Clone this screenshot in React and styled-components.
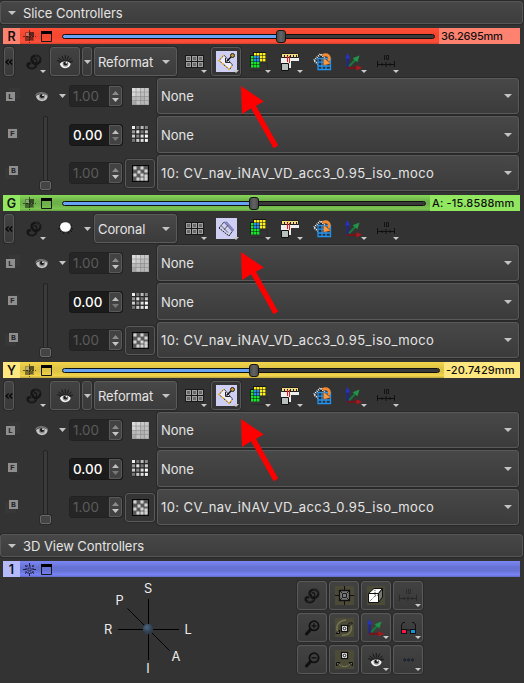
import React from "react";
import styled, { createGlobalStyle } from "styled-components";

const Global = createGlobalStyle`
  * { box-sizing: border-box; }
  html, body { margin: 0; background: #333; }
  body { font-family: Inter, "Liberation Sans", sans-serif; font-size: 14px; color: #e4e4e4; overflow: hidden; }
  svg { display: block; flex: none; }
`;

const Page = styled.main`
  width: 524px;
  height: 683px;
  padding-top: 1px;
  background: #333;
`;

const Header = styled.header`
  display: flex;
  align-items: center;
  gap: 7px;
  width: 523px;
  height: 23px;
  padding-left: 7px;
  border: 1px solid #565656;
  border-radius: 3px;
  background: linear-gradient(#474747, #3d3d3d);
  box-shadow: 0 0 0 1px #292929;
  font-size: 13px;
  letter-spacing: -0.06px;
  white-space: nowrap;
`;

const Panel = styled.section`
  position: relative;
  width: 517px;
  height: ${(p) => p.$h || 167}px;
  margin-left: 3px;
`;

const Bar = styled.div`
  display: flex;
  align-items: stretch;
  height: 16px;
  background: linear-gradient(${(p) => p.$c.top}, ${(p) => p.$c.mid} 38%, ${(p) => p.$c.mid} 60%, ${(p) => p.$c.end} 86%, ${(p) => p.$c.edge});
  color: #111;
`;

const BarLetter = styled.div`
  width: 17px;
  background: ${(p) => p.$bg};
  font-size: 12.5px;
  font-weight: 600;
  line-height: 17px;
  text-align: center;
`;

const BarIcons = styled.div`
  display: flex;
  align-items: center;
  gap: 5px;
  padding-left: 3px;
  width: 42px;
`;

const SliderTrack = styled.div`
  position: relative;
  align-self: center;
  flex: 1;
  height: 5px;
  margin-right: 4px;
  border: 1px solid #111;
  border-radius: 3px;
  background: linear-gradient(90deg, #66a3f5 ${(p) => p.$at}px, #393939 ${(p) => p.$at}px);
`;

const SliderKnob = styled.span`
  position: absolute;
  top: -5px;
  left: ${(p) => p.$at}px;
  width: 10px;
  height: 13px;
  border: 1px solid #151515;
  border-radius: 3px;
  background: linear-gradient(90deg, #4b4b4b, #646464, #4b4b4b);
`;

const BarValue = styled.div`
  width: ${(p) => p.$w}px;
  padding-left: 2px;
  background: ${(p) => p.$bg};
  font-size: 11px;
  font-weight: 500;
  letter-spacing: ${(p) => p.$ls}px;
  line-height: 16.5px;
  white-space: nowrap;
`;

const Toolbar = styled.div`
  display: flex;
  height: 30px;
  margin: 3px 0 1px;
  padding-left: 1px;
`;

const Tool = styled.button`
  position: relative;
  display: flex;
  align-items: center;
  justify-content: center;
  width: ${(p) => p.$w || 30}px;
  height: 29px;
  margin: 0 ${(p) => p.$gap ?? 2}px 0 0;
  padding: 0;
  border: 1px solid ${(p) => (p.$raised ? "#595959" : "transparent")};
  border-radius: 3px;
  background: ${(p) => (p.$raised ? (p.$dark ? "#343434" : "linear-gradient(#424242, #393939)") : "none")};
  box-shadow: ${(p) => (p.$raised ? "0 0 0 1px #2a2a2a" : "none")};
  color: #101010;
`;

const Corner = styled.span`
  position: absolute;
  right: 1px;
  bottom: 2px;
`;

const Highlight = styled.span`
  display: block;
  width: 21px;
  height: 21px;
  background: #cfcff4;
`;

const OrientationBox = styled.div`
  display: flex;
  align-items: center;
  justify-content: space-between;
  width: 83px;
  height: 29px;
  margin-right: 2px;
  padding: 0 6px 0 3px;
  border: 1px solid #5b5b5b;
  border-radius: 3px;
  background: linear-gradient(#484848, #3b3b3b);
  box-shadow: 0 0 0 1px #292929;
  font-size: 13px;
  letter-spacing: -0.1px;
`;

const Layers = styled.div`
  display: grid;
  grid-template-columns: 24px 28px 14px 54px 32px 364px;
  grid-template-rows: 36px 37px 36px;
  row-gap: 2px;
  align-items: center;
`;

const BadgeCell = styled.div`
  grid-column: 1;
  grid-row: ${(p) => p.$row};
  padding-left: ${(p) => p.$x}px;
  padding-bottom: ${(p) => p.$up}px;
`;

const EyeCell = styled.div`
  display: flex;
  justify-content: center;
`;

const FadeCell = styled.div`
  grid-column: 2;
  grid-row: 2 / 4;
  align-self: stretch;
  display: flex;
  flex-direction: column;
  align-items: center;
  padding-left: 9px;
`;

const FadeTrack = styled.div`
  width: 5px;
  height: 65px;
  border: 1px solid #232323;
  border-radius: 2px 2px 0 0;
  background: #3a3a3a;
`;

const FadeKnob = styled.div`
  width: 11px;
  height: 9px;
  border: 1px solid #686868;
  border-radius: 2px;
  background: #444;
  box-shadow: 0 0 0 1px #292929;
`;

const ArrowCell = styled.div`
  display: flex;
  justify-content: center;
  padding-bottom: 1px;
`;

const Spin = styled.div`
  grid-column: 4;
  grid-row: ${(p) => p.$row};
  display: flex;
  width: 54px;
  height: 22px;
  border: 1px solid ${(p) => (p.$on ? "#171717" : "#222")};
  border-radius: 3px;
  background: ${(p) => (p.$on ? "#1b1b1b" : "#262626")};
  color: ${(p) => (p.$on ? "#fff" : "#5c5c5c")};
  font-weight: ${(p) => (p.$on ? 500 : 400)};
`;

const SpinText = styled.span`
  flex: 1;
  padding-left: 3px;
  font-size: 13.4px;
  line-height: 21px;
`;

const SpinButtons = styled.span`
  display: flex;
  flex-direction: column;
  align-items: center;
  justify-content: space-between;
  width: 13px;
  padding: 4px 0 3px;
  border: 1px solid #5a5a5a;
  border-radius: 0 3px 3px 0;
  background: #424242;
`;

const InterpCell = styled.div`
  grid-column: 5;
  grid-row: ${(p) => p.$row};
  display: flex;
  justify-content: center;
  padding-left: ${(p) => p.$pad}px;
`;

const VolumeBox = styled.div`
  grid-column: 6;
  grid-row: ${(p) => p.$row};
  align-self: stretch;
  display: flex;
  align-items: center;
  justify-content: space-between;
  margin-left: 2px;
  width: 362px;
  padding: 0 6px 0 3px;
  border: 1px solid #595959;
  border-radius: 3px;
  background: linear-gradient(#484848, #3b3b3b);
  box-shadow: 0 0 0 1px #292929;
  font-size: 13px;
  white-space: nowrap;
`;

const VolumeName = styled.span`
  letter-spacing: ${(p) => p.$ls || 0}px;
`;

const Callout = styled.svg`
  position: absolute;
  left: 237px;
  top: ${(p) => p.$top}px;
  pointer-events: none;
`;

const ViewBody = styled.div`
  display: flex;
  height: 102px;
  padding: 4px 0 0 94px;
`;

const ViewTools = styled.div`
  display: grid;
  grid-template-columns: repeat(4, 30px);
  grid-auto-rows: 29px;
  column-gap: 2px;
  row-gap: 3px;
  margin-left: 97px;
`;

const Space = styled.div`
  height: ${(p) => p.$h}px;
`;

const Triangle = ({ up, c = "#c4c4c4", w = 8, h = 4 }) => (
  <svg width={w} height={h} viewBox="0 0 8 4" preserveAspectRatio="none">
    <path d={up ? "M0 4L4 0L8 4Z" : "M0 0H8L4 4Z"} fill={c} />
  </svg>
);

const CornerMark = () => (
  <Corner><Triangle w={6} h={3} c="#c9c9c9" /></Corner>
);

const SliceIcon = ({ c = "#111" }) => (
  <svg width="13" height="13" viewBox="0 0 13 13">
    <path d="M6.5 0V13M0 6.5H13" stroke="#111" strokeDasharray="2 1" opacity=".6" />
    <path d="M2 2H11V11H2Z" fill={c} opacity=".3" />
    <path d="M2 6H6V11H2Z" fill="#111" opacity=".25" />
    <path d="M6 2H11V6H6Z" fill="#111" opacity=".5" />
    <path d="M6 7H10V10H6Z" fill="#111" opacity=".4" />
    <path d="M3 3H6V6H3Z" fill="#fff" opacity=".3" />
  </svg>
);

const CenterIcon = () => (
  <svg width="13" height="13" viewBox="0 0 13 13" fill="none" stroke="#202040">
    <path d="M6.5 0V3M6.5 10V13M0 6.5H3M10 6.5H13" />
    <path d="M3 3H10V10H3Z" strokeWidth="1.1" strokeDasharray="2 1" />
    <path d="M5 5H8V8H5Z" strokeWidth=".8" />
    <path d="M2 2L4 4M9 9L11 11M2 11L4 9M9 4L11 2" strokeWidth=".7" />
  </svg>
);

const WindowIcon = () => (
  <svg width="11" height="11" viewBox="0 0 11 11">
    <path d="M.5 .5H10.5V10.5H.5Z" fill="none" stroke="#171717" />
    <path d="M0 0H11V3H0Z" fill="#000" />
  </svg>
);

const LinkIcon = ({ size = 16 }) => (
  <svg width={size} height={size} viewBox="0 0 16 16" fill="none" strokeLinecap="round">
    <g stroke="#151515" strokeWidth="2.4">
      <path d="M5.6 6.8C4.6 3.8 7 1.8 10 1.8C13 1.8 14.6 4 14.2 6.4C13.8 9 11.2 10.4 8.6 9.8C7 9.4 6.4 8.2 7 7.2" />
      <path d="M10.2 8.8C11 11.6 9 13.8 6.2 14.2C3.4 14.4 1.4 12.8 1.6 10.8C1.8 9.4 3.2 8.8 4.2 9.6" />
    </g>
    <path d="M8.2 4.8C9.6 4.4 11 5.4 10.6 7" stroke="#151515" strokeWidth="1.4" />
    <path d="M9.4 1.8C12.4 1.4 14 3.6 13.9 5.6M3.4 13C5.4 14.6 8.4 13.6 9.4 11.8" stroke="#363636" strokeWidth=".7" />
  </svg>
);

const EyeIcon = ({ lashes = true, w = 16, h = 14, dim }) => (
  <svg width={w} height={h} viewBox={lashes ? "0 0 17 15" : "2 3 13 12"}>
    {lashes && <path d="M0 6L4 7M1.5 3L5.5 6M5 .8L7 5M8.8 0V4.6M12.5 .8L10.5 5M15.5 3.2L12 6M17 6.5L13 7.2" stroke="#131313" strokeWidth="1" />}
    <path d="M3 9.6C4 6.4 13 6 14.6 9.2C14 15.4 4.6 16 3 9.6Z" fill={dim ? "#c6c6c6" : "#f4f4f4"} />
    <path d="M2.6 8.6C4.8 4.8 12.2 4.4 15 8.8" fill="none" stroke={dim ? "#777" : "#232323"} strokeWidth="1.2" />
    <circle cx="9" cy="9.4" r="3.1" fill="#8a8a8a" />
    <circle cx="9" cy="9" r="2.1" fill="#1a1a1a" />
    <circle cx="10" cy="8.2" r=".9" fill="#eee" />
  </svg>
);

const SunEye = () => (
  <svg width="17" height="15" viewBox="0 0 17 15">
    <path d="M1 8L4 7M3 11L5 9M6 13L7 11M11 11L12 13M13 9L15 11M14 7L16 8M2 4L4 5M15 4L13 5" stroke="#111" />
    <ellipse cx="8.4" cy="6" rx="5.4" ry="4.8" fill="#fff" />
  </svg>
);

const LayoutIcon = () => (
  <svg width="19" height="13" viewBox="0 0 19 13">
    <path d="M0 0H19V13H0Z" fill="#191919" />
    {[0, 1].flatMap((r) => [0, 1, 2].map((c) => (
      <rect key={`${r}${c}`} x={1.5 + 6 * c} y={1.5 + 6 * r} width="4" height="4" fill="#696969" stroke="#a0a0a0" />
    )))}
  </svg>
);

const SliceInSpace = ({ widget }) => (
  <Highlight>
    <svg width="21" height="21" viewBox="0 0 21 21">
      {widget ? (
        <>
          <path d="M3 9.5L8 4L16.5 14L13.5 18.5Z" fill="#ececff" stroke="#151515" strokeDasharray="2 .6" />
          <path d="M3 9.5L8 4" stroke="#f5b91e" strokeWidth="1.4" strokeDasharray="1.5 1.5" />
          <path d="M3 9.5L13.5 18.5L16.5 14" fill="none" stroke="#f5b91e" strokeWidth="1.4" strokeDasharray="2 2" />
          <path d="M10.5 10.5L15 6" stroke="#111" strokeWidth="1.5" />
          <path d="M9.5 7V11.5H14" fill="none" stroke="#222" />
          <circle cx="16.5" cy="4.5" r="2" fill="#c89a2a" stroke="#222" />
        </>
      ) : (
        <>
          <path d="M3 10L8 4L16.5 13L13 18Z" fill="#d0d0f2" stroke="#222" strokeDasharray="2 .7" />
          <path d="M8 4L11 4L18 12L16.5 13Z" fill="#8c8cc8" stroke="#6f6fa6" strokeWidth=".6" />
          <path d="M5.5 8L12 14.5M8 12L12 7" stroke="#444" strokeWidth=".8" />
        </>
      )}
    </svg>
  </Highlight>
);

const VoxelIcon = () => (
  <svg width="19" height="19" viewBox="0 0 19 19">
    <path d="M8 11H18.5V18.5H2" fill="none" stroke="#2a2a2a" />
    <path d="M1 3H4V0H17V10H11V15H1Z" fill="#151515" />
    {[0, 1, 2].flatMap((r) => [0, 1, 2, 3].map((c) => (
      <rect key={`y${r}${c}`} x={5 + 3 * c} y={1 + 3 * r} width="2.5" height="2.5" fill={r > 0 && c < 2 ? "#268ee9" : "#fff01b"} />
    )))}
    {[0, 1, 2, 3].flatMap((r) => [0, 1, 2].map((c) => (
      (c === 0 || r > 1) && <rect key={`g${r}${c}`} x={2 + 3 * c} y={4 + 3 * r} width="2.5" height="2.5" fill="#13e72b" />
    )))}
  </svg>
);

const LightboxRuler = () => (
  <svg width="19" height="18" viewBox="0 0 19 18">
    <path d="M0 5H18V8H10V15H7V10H0Z" fill="#eee" />
    <path d="M.5 .5H17.5V4.5H.5Z" fill="#f2d982" stroke="#222" />
    <path d="M3.5 2V4M6.5 2V4M9.5 2V4M12.5 2V4M15.5 2V4" stroke="#222" />
    <path d="M6.5 3V9M8.5 3V10" stroke="#e81919" strokeWidth="1" />
    <path d="M.5 10.5H7.5V17.5H.5Z" fill="#b8c0be" stroke="#111" />
  </svg>
);

const RotateGrid = () => (
  <svg width="19" height="18" viewBox="0 0 19 18">
    <path d="M1 7.5L7.5 1L12 5L5 11Z" fill="#222" stroke="#f2f2f2" strokeDasharray="1 1" strokeWidth="2" />
    <path d="M5 5.5H17.5V16.5H5ZM5 9.2H17.5M5 13H17.5M9 5.5V16.5M13 5.5V16.5" fill="#26303a" stroke="#2394ef" strokeWidth="1.3" />
    <path d="M9.5 2.6C14 .4 18 3 15.4 8" fill="none" stroke="#f38b32" strokeWidth="2.8" />
    <path d="M10.5 5L10.5 12.2L17.6 10.6Z" fill="#f79a42" stroke="#c85e16" strokeWidth=".5" />
  </svg>
);

const AxesIcon = () => (
  <svg width="18" height="18" viewBox="0 0 18 18">
    <path d="M3.5 14L10.5 6.5" stroke="#16793a" strokeWidth="2" />
    <path d="M7.6 5.2L14.5 2.5L12.4 9.2Z" fill="#219447" />
    <path d="M2.6 15V4" stroke="#1e2890" strokeWidth="2.2" />
    <path d="M0 5.5L2.6 0L5.2 5.5Z" fill="#2733bd" />
    <path d="M2 14.8H12" stroke="#7c1118" strokeWidth="2" />
    <path d="M11.3 12.2L17.5 14.8L11.3 17.4Z" fill="#a01a20" />
  </svg>
);

const RulerIcon = ({ c = "#101010" }) => (
  <svg width="18" height="13" viewBox="0 0 18 13" fill="none" stroke={c}>
    <path d="M7.5 0V5M9.5 .5H11.5V4.5H9.5Z" strokeWidth=".9" />
    <path d="M.5 6V12M17.5 6V12M0 9.5H18M5 8V11M9 7V12M13 8V11" />
  </svg>
);

const BadgeArt = styled.span`
  display: block;
  width: 9px;
  height: 9px;
  background: #8f8f8f;
  box-shadow: ${(p) => p.$x}px ${(p) => p.$y}px 0 1px #373737;
  color: #252525;
  font-family: "Liberation Mono", monospace;
  font-size: 8px;
  font-weight: 700;
  line-height: 9px;
  text-align: center;
`;

const shades = [
  ["#dcdcdc", "#d8d8d8", "#c8c8c8", "#c6c6c6"],
  ["#d6d6d6", "#cccccc", "#bcbcbc", "#c2c2c2"],
  ["#b8b8b8", "#bcbcbc", "#b0b0b0", "#bababa"],
  ["#a8a8a8", "#c2c2c2", "#b4b4b4", "#bababa"],
];
const mixed = [
  ["#eee", "#777", "#bbb", "#888"],
  ["#999", "#e4e4e4", "#777", "#ccc"],
  ["#ccc", "#888", "#ddd", "#fff"],
  ["#777", "#ccc", "#ddd", "#f3f3f3"],
];

const GridIcon = ({ soft }) => (
  <svg width="17" height="17" viewBox="0 0 17 17">
    <rect width="17" height="17" fill={soft ? "#8d8d8d" : "#292929"} />
    {(soft ? shades : mixed).flatMap((row, y) => row.map((c, x) => (
      <rect key={`${x}${y}`} x={x * 4.3} y={y * 4.3} width={soft ? 3.7 : 3} height={soft ? 3.7 : 3} fill={c} />
    )))}
  </svg>
);

const BlurGrid = () => (
  <svg width="17" height="17" viewBox="0 0 17 17">
    <defs>
      <radialGradient id="glow"><stop stopColor="#fff" /><stop offset="1" stopColor="#fff" stopOpacity="0" /></radialGradient>
    </defs>
    <rect x=".5" y=".5" width="16" height="16" fill="#555" stroke="#090404" />
    {[[3, 3], [10, 3], [7, 7], [14, 6], [3, 10], [10, 10], [14, 11], [14, 14], [6, 14], [10, 14]].map(([x, y]) => (
      <circle key={`${x}-${y}`} cx={x} cy={y} r="2.7" fill="url(#glow)" />
    ))}
  </svg>
);

const Magnifier = ({ plus }) => (
  <svg width="15" height="16" viewBox="0 0 15 16" fill="none" stroke="#101010">
    <circle cx="9" cy="5.8" r="4.6" strokeWidth="1.8" />
    <path d="M5.5 9.5L1.5 14" strokeWidth="3" strokeLinecap="round" />
    <path d={plus ? "M6.5 5.8H11.5M9 3.3V8.3" : "M6.5 5.8H11.5"} strokeWidth="1.3" />
  </svg>
);

const CenterView = () => (
  <svg width="19" height="19" viewBox="0 0 19 19" fill="none" stroke="#111">
    <rect width="19" height="19" fill="#4c4b38" stroke="none" />
    <path d="M9.5 0V5M9.5 14V19M0 9.5H5M14 9.5H19" />
    <path d="M4.5 4.5H14.5V14.5H4.5Z" fill="#777" strokeWidth="1.3" />
    <path d="M7.5 7.5H11.5V11.5H7.5ZM4.5 4.5L7 7M14.5 4.5L12 7M4.5 14.5L7 12M14.5 14.5L12 12" strokeWidth=".9" />
  </svg>
);

const CubeIcon = () => (
  <svg width="18" height="19" viewBox="0 0 18 19" stroke="#111">
    <rect width="18" height="19" fill="#4c4b38" stroke="none" />
    <path d="M1.5 7.5L7 2.5H15.5L11.5 7.5Z" fill="#fff" />
    <path d="M11.5 7.5L15.5 2.5V11L11.5 16.5Z" fill="#777" />
    <path d="M1.5 7.5H11.5V16.5H1.5Z" fill="#fff" />
    <path d="M1.5 16.5L8 10V3M8 10L11 9" fill="none" strokeWidth=".8" strokeDasharray="1 1" />
  </svg>
);

const SpinView = ({ rock }) => (
  <svg width="19" height="19" viewBox="0 0 19 19" fill="none" stroke="#111">
    <rect width="19" height="19" fill="#4c4b38" stroke="none" />
    {rock ? (
      <>
        <path d="M4 14C7 17.5 12 17.5 15 14" stroke="#7c7b58" />
        <path d="M1.5 12.5H5L1.5 16ZM17.5 12.5H14L17.5 16Z" fill="#77765a" />
      </>
    ) : (
      <>
        <path d="M3 14C0 8 3 3 11 2M15 6C19 12 14 18 7 17" stroke="#777653" strokeWidth="1.5" />
        <path d="M14 8.5V5H17.5ZM1 15.5H4.5V12Z" fill="#77765a" />
      </>
    )}
    <rect x="6.5" y={rock ? 2.5 : 7.5} width="6" height="6" fill="#fff" strokeWidth="1.3" />
    <circle cx="9.5" cy={rock ? 5.5 : 10.5} r="1.3" />
  </svg>
);

const GlassesIcon = () => (
  <svg width="15" height="12" viewBox="0 0 15 12">
    <path d="M.5 7V3L2 .5H4M14.5 7V3L13 .5H11" fill="none" stroke="#111" />
    <path d="M5 8H10" stroke="#111" />
    <rect x="0" y="7" width="6" height="5" fill="#111" />
    <rect x="9" y="7" width="6" height="5" fill="#111" />
    <rect x="1" y="8" width="4" height="3" fill="#fa174e" />
    <rect x="10" y="8" width="4" height="3" fill="#1494dd" />
  </svg>
);

const DotsIcon = () => (
  <svg width="11" height="4" viewBox="0 0 11 4" fill="#263746" stroke="#111827" strokeWidth=".8">
    <circle cx="1.7" cy="2" r="1.1" /><circle cx="5.6" cy="2" r="1.1" /><circle cx="9.5" cy="2" r="1.1" />
  </svg>
);

const Chevrons = () => (
  <svg width="8" height="6" viewBox="0 0 8 6" fill="none" stroke="#050505" strokeWidth="1.3">
    <path d="M3.7 .5L1 3L3.7 5.5M7.3 .5L4.6 3L7.3 5.5" />
  </svg>
);

const Compass = () => (
  <svg width="103" height="98" viewBox="97 581 103 98">
    <defs>
      <radialGradient id="ball" cx=".4" cy=".35"><stop stopColor="#476782" /><stop offset="1" stopColor="#303c4b" /></radialGradient>
    </defs>
    <path d="M148.5 599V660M118 629.5H179M127.5 608.5L169.5 650.5" stroke="#000" fill="none" />
    <circle cx="148" cy="629" r="5.2" fill="url(#ball)" />
    <g fill="#ececec" fontFamily="Inter, sans-serif" fontSize="12.8" textAnchor="middle">
      <text x="148" y="593">S</text><text x="119.5" y="605">P</text><text x="108" y="633.5">R</text>
      <text x="188" y="633.5">L</text><text x="176" y="661">A</text><text x="148" y="673">I</text>
    </g>
  </svg>
);

const RedArrow = ({ top }) => (
  <Callout $top={top} width="44" height="68" viewBox="0 0 44 68">
    <path d="M1 1L23.8 16.5L16 20.8L38.2 60.5L33.6 63.3L11 23.3L2 29Z" fill="#fe0000" />
  </Callout>
);

const SpinBox = ({ row, value, on, down }) => (
  <Spin $row={row} $on={on}>
    <SpinText>{value}</SpinText>
    <SpinButtons>
      <Triangle up w={7} h={4} c={down ? "#8b8b8b" : "#bdbdbd"} />
      <Triangle w={7} h={4} c={down ? "#c5c5c5" : "#777"} />
    </SpinButtons>
  </Spin>
);

function SlicePanel({ letter, colors, at, value, valueWidth, valueSpacing, orientation, widget, arrowTop }) {
  return (
    <Panel>
      <Bar $c={colors}>
        <BarLetter $bg={colors.light}>{letter}</BarLetter>
        <BarIcons><SliceIcon /><WindowIcon /></BarIcons>
        <SliderTrack $at={at}><SliderKnob $at={at} /></SliderTrack>
        <BarValue $bg={colors.light} $w={valueWidth} $ls={valueSpacing}>{value}</BarValue>
      </Bar>
      <Toolbar>
        <Tool $w={10} $raised $gap={6}><Chevrons /></Tool>
        <Tool $w={28} $gap={2}><LinkIcon /><CornerMark /></Tool>
        <Tool $raised={widget} $gap={2}>{widget ? <EyeIcon /> : <SunEye />}</Tool>
        <Tool $w={10} $raised={widget} $gap={2}><Triangle w={7} /></Tool>
        <OrientationBox>{orientation}<Triangle /></OrientationBox>
        <Tool><LayoutIcon /><CornerMark /></Tool>
        <Tool $raised={widget} $dark><SliceInSpace widget={widget} /><CornerMark /></Tool>
        <Tool><VoxelIcon /><CornerMark /></Tool>
        <Tool><LightboxRuler /><CornerMark /></Tool>
        <Tool><RotateGrid /></Tool>
        <Tool><AxesIcon /><CornerMark /></Tool>
        <Tool><RulerIcon /><CornerMark /></Tool>
      </Toolbar>
      <Layers>
        <BadgeCell $row={1} $x={3} $up={0}><BadgeArt $x={4} $y={-3}>L</BadgeArt></BadgeCell>
        <BadgeCell $row={2} $x={5} $up={3}><BadgeArt $x={1} $y={0}>F</BadgeArt></BadgeCell>
        <BadgeCell $row={3} $x={6} $up={6}><BadgeArt $x={-3} $y={3}>B</BadgeArt></BadgeCell>
        <EyeCell><EyeIcon w={13} h={12} lashes={false} dim /></EyeCell>
        <ArrowCell><Triangle w={7} /></ArrowCell>
        <FadeCell><FadeTrack /><FadeKnob /></FadeCell>
        <SpinBox row={1} value="1.00" down />
        <SpinBox row={2} value="0.00" on />
        <SpinBox row={3} value="1.00" down />
        <InterpCell $row={1} $pad={3}><GridIcon soft /></InterpCell>
        <InterpCell $row={2} $pad={3}><GridIcon /></InterpCell>
        <InterpCell $row={3} $pad={2}><Tool $raised $dark $gap={0}><BlurGrid /></Tool></InterpCell>
        <VolumeBox $row={1}><VolumeName>None</VolumeName><Triangle /></VolumeBox>
        <VolumeBox $row={2}><VolumeName>None</VolumeName><Triangle /></VolumeBox>
        <VolumeBox $row={3}><VolumeName $ls={0.42}>10: CV_nav_iNAV_VD_acc3_0.95_iso_moco</VolumeName><Triangle /></VolumeBox>
      </Layers>
      <RedArrow top={arrowTop} />
    </Panel>
  );
}

const red = { light: "#ff8170", top: "#ff5139", mid: "#f54630", end: "#ff4f38", edge: "#d3402e" };
const green = { light: "#91e860", top: "#86d858", mid: "#6eb04a", end: "#7bc650", edge: "#65a244" };
const yellow = { light: "#ffe77f", top: "#f3d64b", mid: "#dfc344", end: "#f2d54b", edge: "#bda43b" };
const blue = { light: "#b4bafa", top: "#7c88f5", mid: "#6773d4", end: "#7883f8", edge: "#606bc3" };

export default function App() {
  return (
    <>
      <Global />
      <Page>
        <Header><Triangle />Slice Controllers</Header>
        <Space $h={4} />
        <SlicePanel letter="R" colors={red} at={213} value="36.2695mm" valueWidth={81} valueSpacing={-0.25} orientation="Reformat" widget arrowTop={57} />
        <SlicePanel letter="G" colors={green} at={186} value="A: -15.8588mm" valueWidth={90} valueSpacing={0.15} orientation="Coronal" arrowTop={56} />
        <SlicePanel letter="Y" colors={yellow} at={186} value="-20.7429mm" valueWidth={76} valueSpacing={0.1} orientation="Reformat" widget arrowTop={56} />
        <Space $h={5} />
        <Header><Triangle />3D View Controllers</Header>
        <Space $h={4} />
        <Panel $h={118}>
          <Bar $c={blue}>
            <BarLetter $bg={blue.light}>1</BarLetter>
            <BarIcons><CenterIcon /><WindowIcon /></BarIcons>
          </Bar>
          <ViewBody>
            <Compass />
            <ViewTools>
              <Tool $raised><LinkIcon /></Tool>
              <Tool $raised><CenterView /></Tool>
              <Tool $raised><CubeIcon /></Tool>
              <Tool $raised><RulerIcon c="#292929" /><CornerMark /></Tool>
              <Tool $raised><Magnifier plus /></Tool>
              <Tool $raised><SpinView /></Tool>
              <Tool $raised><AxesIcon /><CornerMark /></Tool>
              <Tool $raised><GlassesIcon /><CornerMark /></Tool>
              <Tool $raised><Magnifier /></Tool>
              <Tool $raised><SpinView rock /></Tool>
              <Tool $raised><EyeIcon /><CornerMark /></Tool>
              <Tool $raised><DotsIcon /><CornerMark /></Tool>
            </ViewTools>
          </ViewBody>
        </Panel>
      </Page>
    </>
  );
}
